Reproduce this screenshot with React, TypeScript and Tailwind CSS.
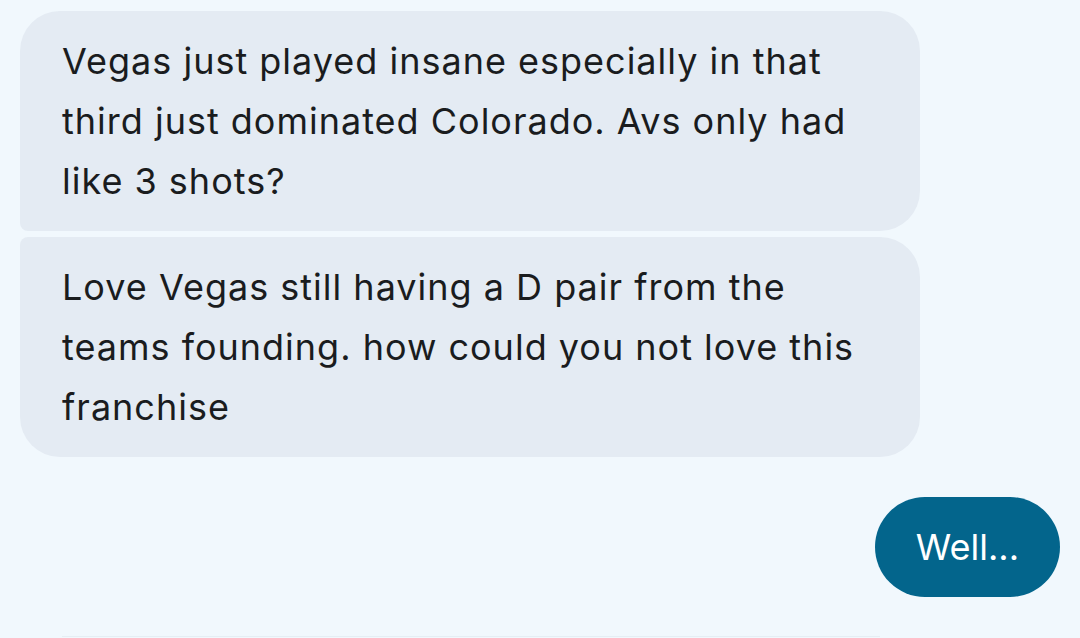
const messages = [
  {
    id: 1,
    lines: ['Vegas just played insane especially in that', 'third just dominated Colorado. Avs only had', 'like 3 shots?'],
    corners: 'rounded-[40px] rounded-bl-[8px]',
  },
  {
    id: 2,
    lines: ['Love Vegas still having a D pair from the', 'teams founding. how could you not love this', 'franchise'],
    corners: 'rounded-[40px] rounded-tl-[8px]',
  },
];

export default function App() {
  return (
    <div
      className="w-[1080px] h-[638px] overflow-hidden bg-[#f1f8fd] text-[#1a1c1e]"
      style={{ fontFamily: 'Inter, Roboto, sans-serif' }}
    >
      <div className="flex flex-col pt-[11px] pl-[20px] pr-[20px]">
        <div className="flex flex-col gap-[6px]">
          {messages.map((m) => (
            <div
              key={m.id}
              className={`w-[900px] bg-[#e4ebf3] px-[42px] py-[20px] text-[36px] leading-[60px] tracking-[1px] whitespace-nowrap ${m.corners}`}
            >
              {m.lines.map((l) => (
                <div key={l}>{l}</div>
              ))}
            </div>
          ))}
        </div>
        <div className="mt-[40px] flex justify-end">
          <div className="h-[100px] rounded-full bg-[#03658c] px-[41px] py-[20px] text-[36px] leading-[60px] text-white">
            Well...
          </div>
        </div>
      </div>
      <div className="mt-[39px] ml-[62px] h-px w-[818px] bg-[#e6eef4]" />
    </div>
  );
}
